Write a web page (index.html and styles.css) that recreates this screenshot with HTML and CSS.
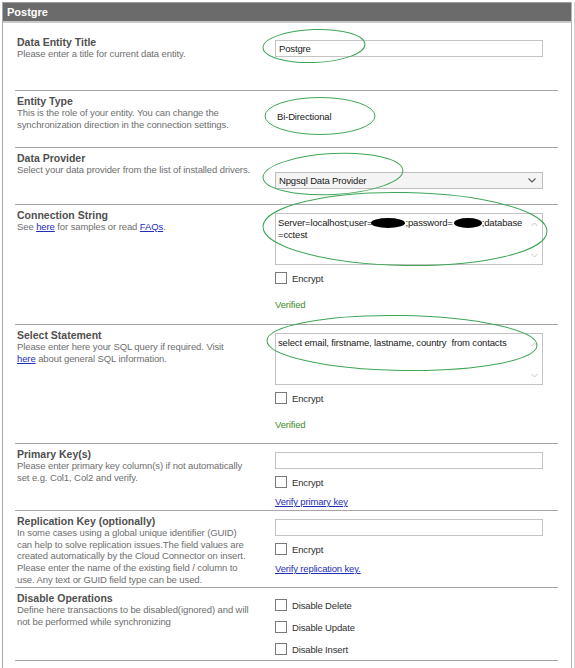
FILE: index.html
```html
<!DOCTYPE html>
<html>
<head>
<meta charset="utf-8">
<link rel="stylesheet" href="styles.css">
</head>
<body>
<div class="panel">
  <div class="header">Postgre</div>
  <div class="body">
    <div class="row h1">
      <div class="info">
        <div class="title">Data Entity Title</div>
        <div class="desc">Please enter a title for current data entity.</div>
      </div>
      <div class="ctrl">
        <div class="input">Postgre</div>
      </div>
    </div>

    <div class="row h2">
      <div class="info">
        <div class="title">Entity Type</div>
        <div class="desc">This is the role of your entity. You can change the synchronization direction in the connection settings.</div>
      </div>
      <div class="ctrl">
        <div class="plain">Bi-Directional</div>
      </div>
    </div>

    <div class="row h3">
      <div class="info">
        <div class="title">Data Provider</div>
        <div class="desc nowrap">Select your data provider from the list of installed drivers.</div>
      </div>
      <div class="ctrl">
        <div class="select"><span>Npgsql Data Provider</span>
          <svg class="chev" width="8" height="5" viewBox="0 0 8 5"><path d="M0.5 0.5 L4 4 L7.5 0.5" fill="none" stroke="#555" stroke-width="1.1"/></svg>
        </div>
      </div>
    </div>

    <div class="row h4">
      <div class="info">
        <div class="title">Connection String</div>
        <div class="desc">See <a class="link" href="#">here</a> for samples or read <a class="link" href="#">FAQs</a>.</div>
      </div>
      <div class="ctrl">
        <div class="textarea">
          <div class="ta-text">Server=localhost;user=<span class="blob b1"></span>;password=<span class="blob b2"></span>;database<br>=cctest</div>
          <div class="scroll">
            <svg width="7" height="5" viewBox="0 0 7 5"><path d="M0.5 4 L3.5 1 L6.5 4" fill="none" stroke="#c4c4c4" stroke-width="1"/></svg>
            <svg width="7" height="5" viewBox="0 0 7 5"><path d="M0.5 1 L3.5 4 L6.5 1" fill="none" stroke="#c4c4c4" stroke-width="1"/></svg>
          </div>
        </div>
        <label class="check"><span class="box"></span>Encrypt</label>
        <div class="verified">Verified</div>
      </div>
    </div>

    <div class="row h5">
      <div class="info">
        <div class="title">Select Statement</div>
        <div class="desc">Please enter here your SQL query if required. Visit<br><a class="link" href="#">here</a> about general SQL information.</div>
      </div>
      <div class="ctrl">
        <div class="textarea">
          <div class="ta-text">select email, firstname, lastname, country&nbsp; from contacts</div>
          <div class="scroll">
            <svg width="7" height="5" viewBox="0 0 7 5"><path d="M0.5 4 L3.5 1 L6.5 4" fill="none" stroke="#d0d0d0" stroke-width="1"/></svg>
            <svg width="7" height="5" viewBox="0 0 7 5"><path d="M0.5 1 L3.5 4 L6.5 1" fill="none" stroke="#c4c4c4" stroke-width="1"/></svg>
          </div>
        </div>
        <label class="check"><span class="box"></span>Encrypt</label>
        <div class="verified">Verified</div>
      </div>
    </div>

    <div class="row h6">
      <div class="info">
        <div class="title">Primary Key(s)</div>
        <div class="desc">Please enter primary key column(s) if not automatically set e.g. Col1, Col2 and verify.</div>
      </div>
      <div class="ctrl">
        <div class="input"></div>
        <label class="check"><span class="box"></span>Encrypt</label>
        <a class="link vlink" href="#">Verify primary key</a>
      </div>
    </div>

    <div class="row h7">
      <div class="info">
        <div class="title">Replication Key (optionally)</div>
        <div class="desc">In some cases using a global unique identifier (GUID) can help to solve replication issues.The field values are created automatically by the Cloud Connector on insert. Please enter the name of the existing field / column to use. Any text or GUID field type can be used.</div>
      </div>
      <div class="ctrl">
        <div class="input"></div>
        <label class="check"><span class="box"></span>Encrypt</label>
        <a class="link vlink" href="#">Verify replication key.</a>
      </div>
    </div>

    <div class="row h8">
      <div class="info">
        <div class="title">Disable Operations</div>
        <div class="desc">Define here transactions to be disabled(ignored) and will not be performed while synchronizing</div>
      </div>
      <div class="ctrl ops">
        <label class="check op"><span class="box"></span>Disable Delete</label>
        <label class="check op"><span class="box"></span>Disable Update</label>
        <label class="check op"><span class="box"></span>Disable Insert</label>
      </div>
    </div>
  </div>

  <svg class="marks" width="575" height="668" viewBox="0 0 575 668">
    <g fill="none" stroke="#3fa556" stroke-width="1">
      <ellipse cx="314" cy="46" rx="51" ry="16.5" transform="rotate(-2 314 46)"/>
      <ellipse cx="320" cy="116" rx="55" ry="18.5"/>
      <ellipse cx="333" cy="174" rx="70" ry="20.5" transform="rotate(-3 333 174)"/>
      <ellipse cx="405" cy="229" rx="142" ry="36.5" transform="rotate(1 405 229)"/>
      <ellipse cx="402" cy="343" rx="135" ry="27.5" transform="rotate(1 402 343)"/>
    </g>
  </svg>
</div>
</body>
</html>
```
FILE: styles.css
```css
html, body {
  margin: 0;
  padding: 0;
  background: #ffffff;
}

body {
  width: 575px;
  height: 668px;
  overflow: hidden;
  font-family: "Liberation Sans", Arial, sans-serif;
}

.panel {
  position: relative;
  margin-left: 2px;
  margin-top: 2px;
  width: 568px;
  height: 670px;
  border-left: 1px solid #a9a9a9;
  border-right: 1px solid #b5b5b5;
  box-shadow: 2px 0 0 #ffffff, 3px 0 0 #d6d6d6;
}

.header {
  height: 18px;
  border-top: 1px solid #9c9c9c;
  border-bottom: 2px solid #c9c9c9;
  background: #6b6b6b;
  color: #ffffff;
  font-weight: bold;
  font-size: 11px;
  line-height: 18px;
  padding-left: 4px;
}

.body {
  padding-top: 9px;
}

.row {
  display: grid;
  grid-template-columns: 260px 268px;
  margin: 0 13px 0 12px;
  border-bottom: 1px solid #a6a6a6;
  box-sizing: border-box;
  padding-top: 4px;
}

.h1 { height: 59px; }
.h2 { height: 57px; }
.h3 { height: 57px; }
.h4 { height: 120px; }
.h5 { height: 119px; }
.h6 { height: 67px; }
.h7 { height: 77px; }
.h8 { height: 73px; }

.info {
  padding-left: 2px;
  padding-right: 22px;
}

.title {
  font-size: 10.5px;
  font-weight: bold;
  line-height: 12px;
  color: #4f4f4f;
}

.desc {
  font-size: 9.5px;
  letter-spacing: -0.1px;
  line-height: 11.7px;
  color: #6e6e6e;
}

.nowrap {
  white-space: nowrap;
}

.link {
  color: #1f2fb8;
  text-decoration: underline;
}

.ctrl {
  padding-top: 4px;
  font-size: 9.5px;
  letter-spacing: -0.15px;
  color: #202020;
}

.input {
  height: 17px;
  box-sizing: border-box;
  border: 1px solid #c3c3c3;
  line-height: 15px;
  padding-left: 3px;
  background: #ffffff;
}

.plain {
  margin-top: 12px;
  padding-left: 2px;
  line-height: 12px;
}

.select {
  margin-top: 16px;
  height: 17px;
  box-sizing: border-box;
  border: 1px solid #bdbdbd;
  background: #f4f4f4;
  display: flex;
  align-items: center;
  justify-content: space-between;
  padding: 0 6px 0 3px;
}

.textarea {
  position: relative;
  height: 52px;
  box-sizing: border-box;
  border: 1px solid #c3c3c3;
  display: flex;
  justify-content: space-between;
}

.ta-text {
  padding: 3px 0 0 2px;
  line-height: 11.5px;
  white-space: nowrap;
}

.scroll {
  width: 16px;
  display: flex;
  flex-direction: column;
  justify-content: space-between;
  align-items: center;
  padding: 8px 0 6px;
}

.scroll svg {
  display: block;
}

.blob {
  display: inline-block;
  height: 10px;
  background: #000000;
  border-radius: 50%;
  vertical-align: -2px;
}

.b1 { width: 34px; margin-left: -1px; }
.b2 { width: 28px; margin-left: 1px; }

.check {
  display: flex;
  align-items: center;
  height: 14px;
  margin-top: 6px;
  color: #303030;
}

.box {
  width: 12px;
  height: 12px;
  box-sizing: border-box;
  border: 1px solid #7a7a7a;
  background: #ffffff;
  margin-right: 5px;
}

.verified {
  margin-top: 14px;
  line-height: 12px;
  color: #3e8f2a;
}

.vlink {
  display: block;
  margin-top: 7px;
  line-height: 12px;
}

.ops {
  padding-top: 2px;
}

.op {
  height: 22px;
  margin-top: 0;
}

.marks {
  position: absolute;
  left: -3px;
  top: -2px;
  pointer-events: none;
}
```
